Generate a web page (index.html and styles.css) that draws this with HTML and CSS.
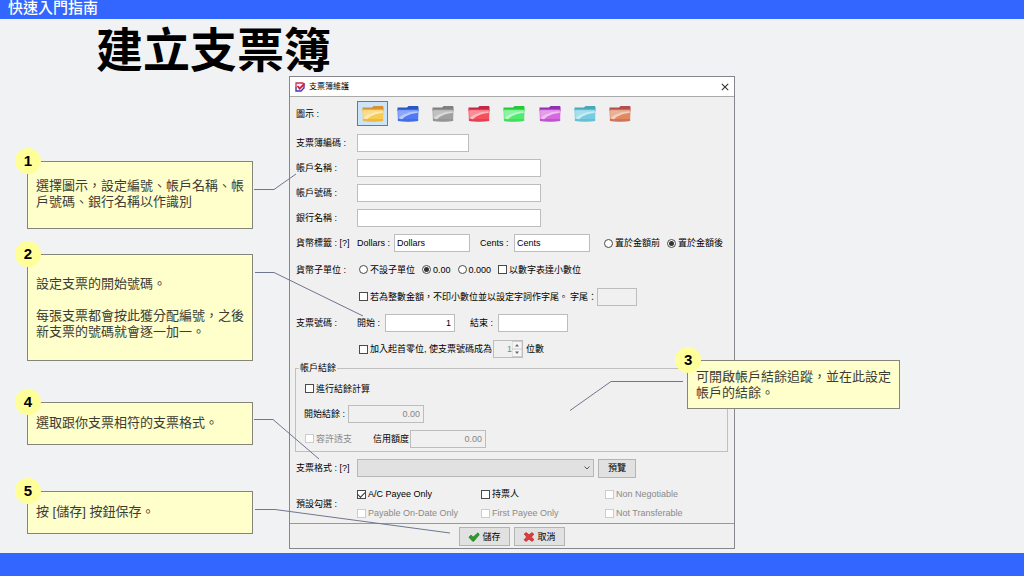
FILE: index.html
```html
<!DOCTYPE html>
<html lang="zh-Hant">
<head>
<meta charset="utf-8">
<title>快速入門指南</title>
<link rel="stylesheet" href="styles.css">
</head>
<body>
<div class="slide">
  <header class="topbar">快速入門指南</header>
  <h1 class="title">建立支票簿</h1>
  <main class="stage">
    <div class="notes">
      <section class="note note-1"><span class="badge">1</span><p>選擇圖示，設定編號、帳戶名稱、帳戶號碼、銀行名稱以作識別</p></section>
      <section class="note note-2"><span class="badge">2</span><p>設定支票的開始號碼。</p><p>每張支票都會按此獲分配編號，之後新支票的號碼就會逐一加一。</p></section>
      <section class="note note-4"><span class="badge">4</span><p>選取跟你支票相符的支票格式。</p></section>
      <section class="note note-5"><span class="badge">5</span><p>按 [儲存] 按鈕保存。</p></section>
    </div>

    <form class="dialog">
      <div class="dialog-bar">
        <svg class="app-icon" viewBox="0 0 10 10"><path d="M1 1h8v5L6 9H1z" fill="#f4f0ff"/><path d="M1 6V1h7.500" fill="none" stroke="#c8325a" stroke-width="1.300"/><path d="M1 5.500V9h5L9 6V1" fill="none" stroke="#4038b4" stroke-width="1.400"/><path d="M2.500 4l2.200 2.600L9.200 2" fill="none" stroke="#d8203a" stroke-width="1.800"/></svg>
        <span class="dialog-name">支票簿維護</span>
        <button class="close" type="button" aria-label="關閉"><svg viewBox="0 0 8 8"><path d="M.8.8l6.400 6.400M7.200.8L.8 7.200" stroke="#333" stroke-width="1.100"/></svg></button>
      </div>

      <svg class="defs" aria-hidden="true">
        <symbol id="folder" viewBox="0 0 22 18">
          <path d="M.5 2.500h9.500l1.500-1.500h9.500l.5 1V6H.5z" fill="var(--tab)"/>
          <path d="M.5 4.500h21l-.4 11.500q-10 1.600-20.200 0z" fill="var(--base)"/>
          <path d="M1.200 5.300h19.600v1C13 7 6 9.500 1.400 13.500z" fill="#fff" opacity=".35"/>
          <path d="M1.400 13.300C6 9 12.500 6.700 20.700 6.200v1.800C13.500 8.500 8 11 5 14.500z" fill="#fff" opacity=".6"/>
          <path d="M1 14h20.200v2q-10 1.600-20.200 0z" fill="var(--tab)" opacity=".35"/>
        </symbol>
      </svg>

      <div class="panel">
        <div class="row row-icons">
          <span class="label">圖示 :</span>
          <div class="folders">
            <button type="button" class="folder yellow selected" aria-label="黃"><svg><use href="#folder"/></svg></button>
            <button type="button" class="folder blue" aria-label="藍"><svg><use href="#folder"/></svg></button>
            <button type="button" class="folder gray" aria-label="灰"><svg><use href="#folder"/></svg></button>
            <button type="button" class="folder red" aria-label="紅"><svg><use href="#folder"/></svg></button>
            <button type="button" class="folder green" aria-label="綠"><svg><use href="#folder"/></svg></button>
            <button type="button" class="folder purple" aria-label="紫"><svg><use href="#folder"/></svg></button>
            <button type="button" class="folder cyan" aria-label="青"><svg><use href="#folder"/></svg></button>
            <button type="button" class="folder brown" aria-label="啡"><svg><use href="#folder"/></svg></button>
          </div>
        </div>
        <div class="row"><label class="label" for="code">支票簿編碼 :</label><input class="field w-code" id="code" type="text"></div>
        <div class="row"><label class="label" for="name">帳戶名稱 :</label><input class="field w-name" id="name" type="text"></div>
        <div class="row"><label class="label" for="number">帳戶號碼 :</label><input class="field w-name" id="number" type="text"></div>
        <div class="row"><label class="label" for="bank">銀行名稱 :</label><input class="field w-name" id="bank" type="text"></div>
        <div class="row row-tall">
          <span class="label">貨幣標籤 : [?]</span>
          <label class="sub sub-dollars" for="dollars">Dollars :</label><input class="field w-unit" id="dollars" type="text" value="Dollars">
          <label class="sub sub-cents" for="cents">Cents :</label><input class="field w-unit" id="cents" type="text" value="Cents">
          <div class="choices choices-end">
            <label class="check"><input type="radio" name="place">置於金額前</label>
            <label class="check"><input type="radio" name="place" checked>置於金額後</label>
          </div>
        </div>
        <div class="row row-tall">
          <span class="label">貨幣子單位 :</span>
          <div class="choices inset">
            <label class="check"><input type="radio" name="sub">不設子單位</label>
            <label class="check"><input type="radio" name="sub" checked>0.00</label>
            <label class="check"><input type="radio" name="sub">0.000</label>
            <label class="check"><input type="checkbox">以數字表達小數位</label>
          </div>
        </div>
        <div class="row row-tall">
          <span class="label"></span>
          <label class="check inset"><input type="checkbox">若為整數金額，不印小數位並以設定字詞作字尾。</label>
          <label class="suffix" for="suffix">字尾：</label><input class="field w-suffix" id="suffix" type="text" disabled>
        </div>
        <div class="row row-tall">
          <span class="label">支票號碼 :</span>
          <label class="sub sub-start" for="start">開始 :</label><input class="field num w-num" id="start" type="text" value="1">
          <label class="sub sub-finish" for="finish">結束 :</label><input class="field num w-num" id="finish" type="text">
        </div>
        <div class="row row-tall">
          <span class="label"></span>
          <label class="check inset"><input type="checkbox">加入起首零位, 使支票號碼成為</label>
          <span class="spinner"><input type="text" value="1" disabled aria-label="位數"><svg viewBox="0 0 10 16"><path d="M0 .5h10v15H0zM0 8h10" fill="#f6f6f6" stroke="#ccc"/><path d="M3 5.500L5 3l2 2.500zM3 10.500L5 13l2-2.500z" fill="#666"/></svg></span>
          <span>位數</span>
        </div>

        <fieldset class="balance">
          <legend>帳戶結餘</legend>
          <div class="brow brow-check"><label class="check"><input type="checkbox">進行結餘計算</label></div>
          <div class="brow"><label class="sub sub-opening" for="opening">開始結餘 :</label><input class="field num w-unit" id="opening" type="text" value="0.00" disabled></div>
          <div class="brow brow-check"><label class="check off check-credit"><input type="checkbox" disabled>容許透支</label><label class="sub-credit" for="credit">信用額度</label><input class="field num w-unit" id="credit" type="text" value="0.00" disabled></div>
        </fieldset>

        <div class="row row-format">
          <label class="label" for="format">支票格式 : [?]</label>
          <select class="format" id="format"><option></option></select>
          <button class="button preview" type="button">預覽</button>
        </div>
        <div class="row row-presets">
          <span class="label">預設勾選 :</span>
          <div class="presets">
            <label class="check"><input type="checkbox" checked>A/C Payee Only</label>
            <label class="check"><input type="checkbox">持票人</label>
            <label class="check off"><input type="checkbox" disabled>Non Negotiable</label>
            <label class="check off"><input type="checkbox" disabled>Payable On-Date Only</label>
            <label class="check off"><input type="checkbox" disabled>First Payee Only</label>
            <label class="check off"><input type="checkbox" disabled>Not Transferable</label>
          </div>
        </div>
      </div>
      <div class="actions">
        <button class="button" type="button"><svg viewBox="0 0 12 10"><path d="M.8 5.200L3 3l2.200 2L10 .8l1.300 2L5.800 9.200H4.600z" fill="#2a9a2c" stroke="#1d7420" stroke-width=".6"/></svg>儲存</button>
        <button class="button" type="button"><svg viewBox="0 0 12 10"><path d="M1.200 2L3.200.6 6 2.800 9 .6l1.800 1.600L8.400 5l2.600 2.600L9 9.400 6 7.200 3 9.400 1 7.800 3.600 5z" fill="#e03c3c" stroke="#a81e22" stroke-width=".6"/></svg>取消</button>
      </div>
    </form>
  </main>
  <footer class="bottombar"></footer>

  <svg class="lines" viewBox="0 0 1024 576" preserveAspectRatio="none" aria-hidden="true">
    <path d="M254 189.500H274L296 174"/>
    <path d="M255 272.500H274L363 316"/>
    <path d="M254 419.500H273L319 459"/>
    <path d="M255 509.500H275L450 533"/>
    <path d="M683 381.500H611L570 410.500"/>
  </svg>
  <section class="note note-3"><span class="badge">3</span><p>可開啟帳戶結餘追蹤，並在此設定帳戶的結餘。</p></section>
</div>
</body>
</html>
```
FILE: styles.css
```css
* { box-sizing: border-box; }
body {
  margin: 0;
  font-family: "Liberation Sans", "Noto Sans CJK TC", sans-serif;
  background: #f1f2f4;
  color: #000;
}
button, input, select { font: inherit; color: inherit; margin: 0; }
p { margin: 0; }

.slide {
  position: relative;
  display: grid;
  grid-template-rows: auto auto 1fr 23px;
  min-height: 100vh;
}
.topbar {
  height: 19px;
  padding-left: 8px;
  background: #3366ff;
  color: #fff;
  font-size: 15px;
  font-weight: 500;
  line-height: 16px;
}
.title {
  margin: 0;
  padding: 6px 0 0 96px;
  font-size: 47px;
  font-weight: 700;
  line-height: 51px;
  color: #000;
}
.bottombar { background: #3366ff; }
.stage {
  display: grid;
  grid-template-columns: 289fr 446fr 289fr;
  align-items: start;
  padding-bottom: 3px;
}

/* notes */
.notes { padding: 85px 36px 0 27px; }
.note {
  position: relative;
  border: 1px solid #85857a;
  background: #ffffcc;
  color: #3c3c34;
  font-size: 13px;
  line-height: 16px;
}
.note-1 { padding: 16px 5px 18px 8px; }
.note-2 { padding: 21px 5px 20px 8px; margin-top: 25px; }
.note-2 p + p { margin-top: 16px; }
.note-4 { padding: 12px 5px 13px 8px; margin-top: 41px; }
.note-5 { padding: 12px 5px 13px 8px; margin-top: 46px; }
.note-3 {
  position: absolute;
  top: 360px;
  left: 67.1%;
  width: 213px;
  padding: 8px 4px 7px 8px;
}
.badge {
  position: absolute;
  top: -14px;
  left: -13px;
  width: 26px;
  height: 26px;
  border-radius: 50%;
  background: #ffff99;
  color: #000;
  font-size: 15px;
  font-weight: 700;
  line-height: 26px;
  text-align: center;
}
.lines {
  position: absolute;
  inset: 0;
  width: 100%;
  height: 100%;
  pointer-events: none;
}
.lines path {
  fill: none;
  stroke: #6f7690;
  stroke-width: 1;
  vector-effect: non-scaling-stroke;
}

/* dialog */
.dialog {
  border: 1px solid #85878c;
  background: #f0f0f0;
  font-size: 9px;
  line-height: 12px;
  white-space: nowrap;
}
.dialog-bar {
  display: flex;
  align-items: center;
  height: 20px;
  padding: 0 5px;
  gap: 4px;
  background: #fff;
  border-bottom: 1px solid #aaa;
}
.app-icon { width: 10px; height: 10px; }
.dialog-name { flex: 1; font-size: 8px; }
.close { display: flex; padding: 0; border: 0; background: none; }
.close svg { width: 8px; height: 8px; }
.defs { display: none; }
.panel { border-bottom: 1px solid #999; }

.row { display: flex; align-items: center; height: 25px; padding-left: 6px; }
.row-icons { height: 33px; }
.row-tall { height: 26px; }
.row-tall + .row-tall { height: 27px; }
.row-tall + .row-tall + .row-tall + .row-tall { height: 26px; }
.label { flex: none; width: 61px; }

.field {
  height: 18px;
  padding: 0 3px 0 2px;
  border: 1px solid #bdbdbd;
  background: #fff;
}
.field:disabled { background: #f0f0f0; color: #858585; }
.num { text-align: right; }
.w-code { width: 112px; }
.w-name { width: 184px; }
.w-unit { width: 76px; }
.w-num { width: 70px; }
.w-suffix { width: 40px; }
.sub-dollars { width: 37px; }
.sub-cents { width: 34px; margin-left: 10px; }
.sub-start { width: 28px; }
.sub-finish { width: 28px; margin-left: 15px; }
.sub-opening { width: 44px; }
.sub-credit { width: 37px; }
.suffix { margin-left: 2px; }

.check { display: inline-flex; align-items: center; gap: 2px; }
.check.off { color: #8a8a8a; }
.check input {
  appearance: none;
  flex: none;
  display: grid;
  place-items: center;
  width: 9px;
  height: 9px;
  border: 1px solid #4a4a4a;
  background: #fff;
}
.check input[type="radio"] { border-radius: 50%; }
.check input[type="radio"]:checked::after {
  content: "";
  width: 5px;
  height: 5px;
  border-radius: 50%;
  background: #333;
}
.check input[type="checkbox"]:checked::after {
  content: "";
  width: 6px;
  height: 3px;
  border: solid #333;
  border-width: 0 0 1px 1px;
  transform: rotate(-45deg);
}
.check input:disabled { border-color: #ccc; }
.choices { display: flex; gap: 7px; }
.choices-end { margin-left: 14px; }
.inset { margin-left: 2px; }

.spinner {
  display: flex;
  width: 30px;
  height: 18px;
  margin: 0 3px 0 1px;
  border: 1px solid #bdbdbd;
}
.spinner input {
  width: 18px;
  padding: 0;
  border: 0;
  background: #f0f0f0;
  color: #858585;
  text-align: right;
}
.spinner svg { width: 10px; height: 16px; }

.folders { display: flex; justify-content: space-between; width: 279px; }
.folder {
  display: grid;
  place-items: center;
  width: 31px;
  height: 25px;
  padding: 0;
  border: 1px solid transparent;
  background: none;
}
.folder svg { width: 22px; height: 18px; }
.folder.selected { background: #cce4f7; border-color: #4584b8; }
.yellow { --tab: #d89030; --base: #f8cc50; }
.blue { --tab: #2858c8; --base: #5078f4; }
.gray { --tab: #808080; --base: #a0a0a0; }
.red { --tab: #c42848; --base: #f4505c; }
.green { --tab: #28c838; --base: #50ec70; }
.purple { --tab: #9030b4; --base: #d868e0; }
.cyan { --tab: #48aab8; --base: #78cce0; }
.brown { --tab: #b05050; --base: #e08860; }

.balance {
  margin: 0 6px 0 5px;
  padding: 2px 0 0;
  border: 1px solid #c0c0c0;
}
.balance legend { margin-left: 3px; padding: 0 1px; }
.brow { display: flex; align-items: center; height: 25px; padding-left: 8px; }
.brow-check { padding-left: 9px; }
.check-credit { width: 68px; }

.row-format { height: 32px; }
.format {
  appearance: none;
  width: 237px;
  height: 18px;
  margin-right: 4px;
  border: 1px solid #b8b8b8;
  border-radius: 0;
  background: #e1e1e1 url("data:image/svg+xml,%3Csvg xmlns='http://www.w3.org/2000/svg' width='6' height='4'%3E%3Cpath d='M.5.5L3 3 5.500.5' fill='none' stroke='%23555'/%3E%3C/svg%3E") no-repeat right 3px center;
}
.button {
  display: inline-flex;
  align-items: center;
  justify-content: center;
  gap: 2px;
  width: 51px;
  height: 19px;
  padding: 0;
  border: 1px solid #b4b4b4;
  background: #e1e1e1;
}
.button svg { width: 12px; height: 10px; }
.preview { width: 38px; }
.row-presets { height: 39px; }
.presets { display: grid; grid-template-columns: repeat(3, 124px); grid-auto-rows: 19px; }
.actions { display: flex; justify-content: center; gap: 4px; padding: 3px 0 2px; }
```
